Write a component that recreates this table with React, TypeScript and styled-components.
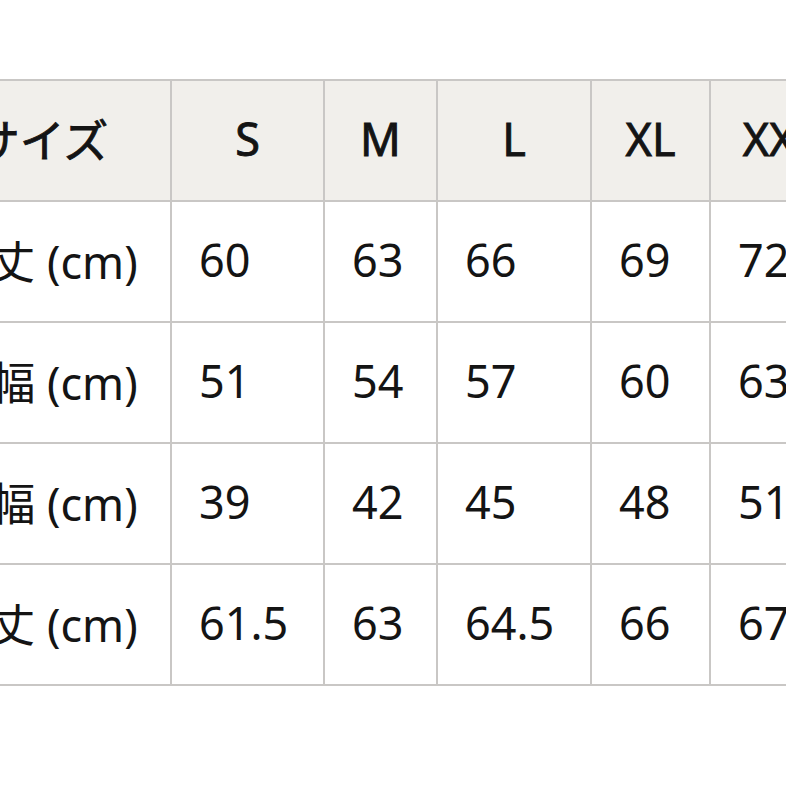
import styled, { createGlobalStyle } from "styled-components";

const GlobalStyle = createGlobalStyle`
    html, body {
        margin: 0;
        padding: 0;
        background: #ffffff;
        overflow: hidden;
    }
`;

const Page = styled.div`
    width: 786px;
    height: 786px;
    overflow: hidden;
    padding-top: 79px;
    box-sizing: border-box;
`;

const Table = styled.table`
    margin-left: -89px;
    border-collapse: collapse;
    table-layout: fixed;
    width: 940px;
    font-family: "Noto Sans", "Noto Sans CJK JP", sans-serif;
    font-size: 45px;
    color: #141414;
`;

const Row = styled.tr`
    height: 121px;
`;

const HeadCell = styled.th`
    background: #f1efeb;
    border: 2px solid #c9c7c5;
    font-weight: 400;
    -webkit-text-stroke: 0.9px currentColor;
    text-align: center;
    padding: 0 0 4px;
`;

const LabelCell = styled.td`
    border: 2px solid #c9c7c5;
    text-align: center;
    padding: 0 0 4px;
`;

const Cell = styled.td`
    border: 2px solid #c9c7c5;
    text-align: left;
    padding: 0 0 4px 27px;
    white-space: nowrap;
`;

const widths = [259, 153, 113, 154, 119, 142];
const sizes = ["S", "M", "L", "XL", "XXL"];

const rows = [
    { label: "着丈 (cm)", values: ["60", "63", "66", "69", "72"] },
    { label: "身幅 (cm)", values: ["51", "54", "57", "60", "63"] },
    { label: "肩幅 (cm)", values: ["39", "42", "45", "48", "51"] },
    { label: "袖丈 (cm)", values: ["61.5", "63", "64.5", "66", "67.5"] },
];

const App = () => (
    <>
        <GlobalStyle />
        <Page>
            <Table>
                <colgroup>
                    {widths.map((w, i) => (
                        <col key={i} style={{ width: w }} />
                    ))}
                </colgroup>
                <thead>
                    <Row>
                        <HeadCell>サイズ</HeadCell>
                        {sizes.map((s) => (
                            <HeadCell key={s}>{s}</HeadCell>
                        ))}
                    </Row>
                </thead>
                <tbody>
                    {rows.map((r) => (
                        <Row key={r.label}>
                            <LabelCell>{r.label}</LabelCell>
                            {r.values.map((v, i) => (
                                <Cell key={i}>{v}</Cell>
                            ))}
                        </Row>
                    ))}
                </tbody>
            </Table>
        </Page>
    </>
);

export default App;
